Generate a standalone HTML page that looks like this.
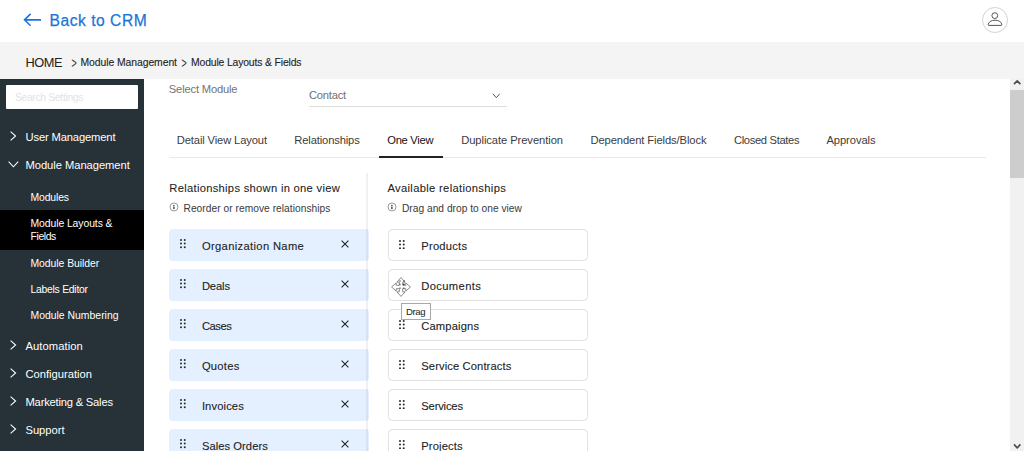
<!DOCTYPE html>
<html lang="en">
<head>
<meta charset="utf-8">
<title>Module Layouts &amp; Fields</title>
<style>
*{box-sizing:border-box;margin:0;padding:0}
html,body{width:1024px;height:451px;overflow:hidden;background:#fff}
body{position:relative;font-family:"Liberation Sans",sans-serif;color:#222}
.t{position:absolute;white-space:pre;line-height:normal;font-weight:400;font-family:"Liberation Sans",sans-serif}
.abs,svg.i{position:absolute;display:block}
ul{list-style:none}
a{text-decoration:none}
/* top header */
.top{position:absolute;left:0;top:0;width:1024px;height:42px;background:#fff}
.avatar{position:absolute;left:982.3px;top:7.2px;width:25.8px;height:25.8px;border:1px solid #d2d2d2;border-radius:50%;background:#fff}
/* breadcrumb */
.crumbs{position:absolute;left:0;top:42px;width:1024px;height:37px;background:#f4f4f4}
/* sidebar */
.side{position:absolute;left:0;top:79px;width:144px;height:372px;background:#263238}
.search{position:absolute;width:132px;height:23.5px;background:#fff;border:0;border-radius:1px}
.active-bg{position:absolute;width:144px;height:40px;background:#000}
/* main */
.main{position:absolute;left:144px;top:79px;width:866px;height:372px;background:#fff}
.sel-line{position:absolute;width:197.5px;height:1px;background:#dedede}
.tab-line{position:absolute;width:817.5px;height:1px;background:#e9e9e9}
.tab-active{position:absolute;width:64.3px;height:2px;background:#222}
.vline{z-index:2;position:absolute;width:2px;height:278px;background:rgba(0,0,0,.055)}
.li-l{position:absolute;width:200px;height:32px;background:#e4f0ff;border-radius:4px}
.li-r{position:absolute;width:200px;height:32px;background:#fff;border:1px solid #e1e1e1;border-radius:4.5px}
.tip{position:absolute;width:29.6px;height:17px;background:#fff;border:1px solid #a8a8a8}
/* scrollbar */
.sb{position:absolute;left:1010px;top:79px;width:14px;height:372px;background:#f1f1f1}
.sb-thumb{position:absolute;width:14px;height:88px;background:#cdcdcd}
.sep{transform:scale(.86,1.4);transform-origin:50% 62%}
</style>
</head>
<body>
<header class="top">
 <a class="back">
  <svg class="i" style="left:23.00px;top:13.00px" width="19" height="14" viewBox="0 0 19 14"><path d="M18 6.85 H1.6 M7.6 0.9 L1.5 6.85 L7.6 12.8" stroke="#1b74d8" stroke-width="1.55" fill="none"/></svg>
  <span class="t" style="left:49.60px;top:11.80px;font-size:15.6px;color:#1b74d8;letter-spacing:0.524px;-webkit-text-stroke:0.25px #1b74d8">Back to CRM</span>
 </a>
 <div class="avatar">
  <svg class="i" style="left:2.70px;top:1.80px" width="18" height="18" viewBox="0 0 18 18"><circle cx="8.8" cy="5.6" r="2.9" fill="none" stroke="#555" stroke-width="1"/><path d="M2.6 15.4 H15.4 C15.9 15.4 15.9 14.6 15.7 13.9 C14.9 11.4 12.2 10.2 9 10.2 C5.8 10.2 3.1 11.4 2.3 13.9 C2.1 14.6 2.1 15.4 2.6 15.4 Z" fill="none" stroke="#555" stroke-width="1"/></svg>
 </div>
</header>
<nav class="crumbs">
 <span class="t home" style="left:25.40px;top:13.00px;font-size:12.8px;color:#222;letter-spacing:-0.435px">HOME</span><span class="t sep" style="left:71.00px;top:15.50px;font-size:10.4px;color:#333;letter-spacing:0.000px">&gt;</span><span class="t" style="left:80.50px;top:15.30px;font-size:10.4px;color:#222;letter-spacing:-0.070px;-webkit-text-stroke:0.1px #222">Module Management</span><span class="t sep" style="left:181.30px;top:15.50px;font-size:10.4px;color:#333;letter-spacing:0.000px">&gt;</span><span class="t" style="left:191.00px;top:15.30px;font-size:10.4px;color:#222;letter-spacing:-0.149px;-webkit-text-stroke:0.1px #222">Module Layouts &amp; Fields</span>
</nav>
<aside class="side">
 <div class="search" style="left:6.00px;top:6.00px"></div><span class="t ph" style="left:14.90px;top:12.80px;font-size:10.4px;color:#e3e3e3;letter-spacing:-0.340px">Search Settings</span>
 <ul class="menu">
  <li><svg class="i chev" style="left:10.40px;top:51.70px" width="7" height="10" viewBox="0 0 7 10"><path d="M0.6 0.6 L5.6 5 L0.6 9.4" stroke="#fff" stroke-width="1.05" fill="none"/></svg><span class="t" style="left:25.50px;top:51.50px;font-size:11.2px;color:#fff;letter-spacing:-0.145px">User Management</span></li>
  <li class="open"><svg class="i chev" style="left:8.20px;top:81.50px" width="11" height="7" viewBox="0 0 11 7"><path d="M0.6 0.6 L5.4 5.8 L10.2 0.6" stroke="#fff" stroke-width="1.05" fill="none"/></svg><span class="t" style="left:25.50px;top:79.60px;font-size:11.2px;color:#fff;letter-spacing:-0.051px">Module Management</span>
   <ul class="sub">
    <li><span class="t" style="left:30.50px;top:112.80px;font-size:10.4px;color:#fff;letter-spacing:-0.130px">Modules</span></li>
    <li class="active"><div class="active-bg" style="left:0.00px;top:131.00px"></div><span class="t" style="left:30.50px;top:139.00px;font-size:10.4px;color:#fff;letter-spacing:-0.079px">Module Layouts &amp;</span><span class="t" style="left:30.50px;top:152.30px;font-size:10.4px;color:#fff;letter-spacing:-0.384px">Fields</span></li>
    <li><span class="t" style="left:30.50px;top:178.80px;font-size:10.4px;color:#fff;letter-spacing:-0.039px">Module Builder</span></li>
    <li><span class="t" style="left:30.50px;top:205.30px;font-size:10.4px;color:#fff;letter-spacing:-0.263px">Labels Editor</span></li>
    <li><span class="t" style="left:30.50px;top:231.40px;font-size:10.4px;color:#fff;letter-spacing:0.014px">Module Numbering</span></li>
   </ul>
  </li>
  <li><svg class="i chev" style="left:10.40px;top:260.50px" width="7" height="10" viewBox="0 0 7 10"><path d="M0.6 0.6 L5.6 5 L0.6 9.4" stroke="#fff" stroke-width="1.05" fill="none"/></svg><span class="t" style="left:25.50px;top:260.60px;font-size:11.2px;color:#fff;letter-spacing:0.078px">Automation</span></li>
  <li><svg class="i chev" style="left:10.40px;top:288.60px" width="7" height="10" viewBox="0 0 7 10"><path d="M0.6 0.6 L5.6 5 L0.6 9.4" stroke="#fff" stroke-width="1.05" fill="none"/></svg><span class="t" style="left:25.50px;top:288.70px;font-size:11.2px;color:#fff;letter-spacing:-0.004px">Configuration</span></li>
  <li><svg class="i chev" style="left:10.40px;top:316.70px" width="7" height="10" viewBox="0 0 7 10"><path d="M0.6 0.6 L5.6 5 L0.6 9.4" stroke="#fff" stroke-width="1.05" fill="none"/></svg><span class="t" style="left:25.50px;top:316.50px;font-size:11.2px;color:#fff;letter-spacing:-0.206px">Marketing &amp; Sales</span></li>
  <li><svg class="i chev" style="left:10.40px;top:344.70px" width="7" height="10" viewBox="0 0 7 10"><path d="M0.6 0.6 L5.6 5 L0.6 9.4" stroke="#fff" stroke-width="1.05" fill="none"/></svg><span class="t" style="left:25.50px;top:344.50px;font-size:11.2px;color:#fff;letter-spacing:-0.031px">Support</span></li>
 </ul>
</aside>
<main class="main">
 <div class="field"><label class="t" style="left:24.80px;top:4.40px;font-size:11.2px;color:#737373;letter-spacing:-0.176px">Select Module</label>
  <div class="select"><span class="t" style="left:165.00px;top:10.00px;font-size:11.2px;color:#707070;letter-spacing:-0.227px">Contact</span><svg class="i" style="left:348.00px;top:13.50px" width="9" height="6" viewBox="0 0 9 6"><path d="M0.9 0.8 L4.3 4.7 L7.7 0.8" stroke="#555" stroke-width="1" fill="none"/></svg><div class="sel-line" style="left:165.00px;top:26.50px"></div></div>
 </div>
 <div class="tabs">
  <span class="t" style="left:32.80px;top:55.30px;font-size:11.2px;color:#3c3c3c;letter-spacing:-0.133px">Detail View Layout</span><span class="t" style="left:150.30px;top:55.30px;font-size:11.2px;color:#3c3c3c;letter-spacing:-0.139px">Relationships</span><span class="t on" style="left:243.30px;top:55.30px;font-size:11.2px;color:#111;letter-spacing:-0.302px">One View</span><span class="t" style="left:317.20px;top:55.30px;font-size:11.2px;color:#3c3c3c;letter-spacing:-0.075px">Duplicate Prevention</span><span class="t" style="left:446.50px;top:55.30px;font-size:11.2px;color:#3c3c3c;letter-spacing:-0.103px">Dependent Fields/Block</span><span class="t" style="left:590.00px;top:55.30px;font-size:11.2px;color:#3c3c3c;letter-spacing:-0.346px">Closed States</span><span class="t" style="left:682.50px;top:55.30px;font-size:11.2px;color:#3c3c3c;letter-spacing:-0.094px">Approvals</span>
  <div class="tab-line" style="left:24.50px;top:78.00px"></div><div class="tab-active" style="left:234.50px;top:76.50px"></div>
 </div>
 <div class="vline" style="left:222.00px;top:94.00px"></div>
 <section class="col-l">
  <h3 class="t" style="left:25.30px;top:103.30px;font-size:11.2px;color:#222;letter-spacing:0.293px;-webkit-text-stroke:0.07px #222">Relationships shown in one view</h3><svg class="i info" style="left:24.60px;top:123.05px" width="10" height="10" viewBox="0 0 10 10"><circle cx="5" cy="5" r="4" fill="none" stroke="#808080" stroke-width=".8"/><circle cx="4.9" cy="3.5" r=".65" fill="#222"/><rect x="4.3" y="4.6" width="1.2" height="2.5" fill="#222"/></svg><p class="t" style="left:39.50px;top:123.50px;font-size:10.2px;color:#3a3a3a;letter-spacing:0.046px">Reorder or remove relationships</p>
  <ul class="list-l">
   <li><div class="li-l" style="left:25.00px;top:150.00px"></div><svg class="i grip" style="left:36.00px;top:160.40px" width="5.8" height="9.2" viewBox="0 0 5.8 9.2"><g fill="#2a2a2a"><circle cx="1" cy="1" r=".98"/><circle cx="4.75" cy="1" r=".98"/><circle cx="1" cy="4.6" r=".98"/><circle cx="4.75" cy="4.6" r=".98"/><circle cx="1" cy="8.2" r=".98"/><circle cx="4.75" cy="8.2" r=".98"/></g></svg><span class="t" style="left:57.90px;top:160.60px;font-size:11.2px;color:#222;letter-spacing:0.344px;-webkit-text-stroke:0.1px #222">Organization Name</span><svg class="i close" style="left:196.60px;top:160.60px" width="8" height="8" viewBox="0 0 8 8"><path d="M0.6 0.6 L7.4 7.4 M7.4 0.6 L0.6 7.4" stroke="#222" stroke-width="1.05" fill="none"/></svg></li>
   <li><div class="li-l" style="left:25.00px;top:190.00px"></div><svg class="i grip" style="left:36.00px;top:200.40px" width="5.8" height="9.2" viewBox="0 0 5.8 9.2"><g fill="#2a2a2a"><circle cx="1" cy="1" r=".98"/><circle cx="4.75" cy="1" r=".98"/><circle cx="1" cy="4.6" r=".98"/><circle cx="4.75" cy="4.6" r=".98"/><circle cx="1" cy="8.2" r=".98"/><circle cx="4.75" cy="8.2" r=".98"/></g></svg><span class="t" style="left:57.90px;top:200.60px;font-size:11.2px;color:#222;letter-spacing:-0.127px;-webkit-text-stroke:0.1px #222">Deals</span><svg class="i close" style="left:196.60px;top:200.60px" width="8" height="8" viewBox="0 0 8 8"><path d="M0.6 0.6 L7.4 7.4 M7.4 0.6 L0.6 7.4" stroke="#222" stroke-width="1.05" fill="none"/></svg></li>
   <li><div class="li-l" style="left:25.00px;top:230.00px"></div><svg class="i grip" style="left:36.00px;top:240.40px" width="5.8" height="9.2" viewBox="0 0 5.8 9.2"><g fill="#2a2a2a"><circle cx="1" cy="1" r=".98"/><circle cx="4.75" cy="1" r=".98"/><circle cx="1" cy="4.6" r=".98"/><circle cx="4.75" cy="4.6" r=".98"/><circle cx="1" cy="8.2" r=".98"/><circle cx="4.75" cy="8.2" r=".98"/></g></svg><span class="t" style="left:57.90px;top:240.60px;font-size:11.2px;color:#222;letter-spacing:-0.455px;-webkit-text-stroke:0.1px #222">Cases</span><svg class="i close" style="left:196.60px;top:240.60px" width="8" height="8" viewBox="0 0 8 8"><path d="M0.6 0.6 L7.4 7.4 M7.4 0.6 L0.6 7.4" stroke="#222" stroke-width="1.05" fill="none"/></svg></li>
   <li><div class="li-l" style="left:25.00px;top:270.00px"></div><svg class="i grip" style="left:36.00px;top:280.40px" width="5.8" height="9.2" viewBox="0 0 5.8 9.2"><g fill="#2a2a2a"><circle cx="1" cy="1" r=".98"/><circle cx="4.75" cy="1" r=".98"/><circle cx="1" cy="4.6" r=".98"/><circle cx="4.75" cy="4.6" r=".98"/><circle cx="1" cy="8.2" r=".98"/><circle cx="4.75" cy="8.2" r=".98"/></g></svg><span class="t" style="left:57.90px;top:280.60px;font-size:11.2px;color:#222;letter-spacing:0.264px;-webkit-text-stroke:0.1px #222">Quotes</span><svg class="i close" style="left:196.60px;top:280.60px" width="8" height="8" viewBox="0 0 8 8"><path d="M0.6 0.6 L7.4 7.4 M7.4 0.6 L0.6 7.4" stroke="#222" stroke-width="1.05" fill="none"/></svg></li>
   <li><div class="li-l" style="left:25.00px;top:310.00px"></div><svg class="i grip" style="left:36.00px;top:320.40px" width="5.8" height="9.2" viewBox="0 0 5.8 9.2"><g fill="#2a2a2a"><circle cx="1" cy="1" r=".98"/><circle cx="4.75" cy="1" r=".98"/><circle cx="1" cy="4.6" r=".98"/><circle cx="4.75" cy="4.6" r=".98"/><circle cx="1" cy="8.2" r=".98"/><circle cx="4.75" cy="8.2" r=".98"/></g></svg><span class="t" style="left:57.90px;top:320.60px;font-size:11.2px;color:#222;letter-spacing:0.122px;-webkit-text-stroke:0.1px #222">Invoices</span><svg class="i close" style="left:196.60px;top:320.60px" width="8" height="8" viewBox="0 0 8 8"><path d="M0.6 0.6 L7.4 7.4 M7.4 0.6 L0.6 7.4" stroke="#222" stroke-width="1.05" fill="none"/></svg></li>
   <li><div class="li-l" style="left:25.00px;top:350.00px"></div><svg class="i grip" style="left:36.00px;top:360.40px" width="5.8" height="9.2" viewBox="0 0 5.8 9.2"><g fill="#2a2a2a"><circle cx="1" cy="1" r=".98"/><circle cx="4.75" cy="1" r=".98"/><circle cx="1" cy="4.6" r=".98"/><circle cx="4.75" cy="4.6" r=".98"/><circle cx="1" cy="8.2" r=".98"/><circle cx="4.75" cy="8.2" r=".98"/></g></svg><span class="t" style="left:57.90px;top:360.60px;font-size:11.2px;color:#222;letter-spacing:0.055px;-webkit-text-stroke:0.1px #222">Sales Orders</span><svg class="i close" style="left:196.60px;top:360.60px" width="8" height="8" viewBox="0 0 8 8"><path d="M0.6 0.6 L7.4 7.4 M7.4 0.6 L0.6 7.4" stroke="#222" stroke-width="1.05" fill="none"/></svg></li>
  </ul>
 </section>
 <section class="col-r">
  <h3 class="t" style="left:243.50px;top:103.30px;font-size:11.2px;color:#222;letter-spacing:0.326px;-webkit-text-stroke:0.07px #222">Available relationships</h3><svg class="i info" style="left:243.10px;top:123.05px" width="10" height="10" viewBox="0 0 10 10"><circle cx="5" cy="5" r="4" fill="none" stroke="#808080" stroke-width=".8"/><circle cx="4.9" cy="3.5" r=".65" fill="#222"/><rect x="4.3" y="4.6" width="1.2" height="2.5" fill="#222"/></svg><p class="t" style="left:258.00px;top:123.50px;font-size:10.2px;color:#3a3a3a;letter-spacing:0.017px">Drag and drop to one view</p>
  <ul class="list-r">
   <li><div class="li-r" style="left:244.00px;top:150.00px"></div><svg class="i grip" style="left:255.10px;top:161.00px" width="5.8" height="9.2" viewBox="0 0 5.8 9.2"><g fill="#2a2a2a"><circle cx="1" cy="1" r=".98"/><circle cx="4.75" cy="1" r=".98"/><circle cx="1" cy="4.6" r=".98"/><circle cx="4.75" cy="4.6" r=".98"/><circle cx="1" cy="8.2" r=".98"/><circle cx="4.75" cy="8.2" r=".98"/></g></svg><span class="t" style="left:277.30px;top:161.40px;font-size:11.2px;color:#222;letter-spacing:0.221px;-webkit-text-stroke:0.1px #222">Products</span></li>
   <li><div class="li-r" style="left:244.00px;top:190.00px"></div><svg class="i grip" style="left:255.10px;top:201.00px" width="5.8" height="9.2" viewBox="0 0 5.8 9.2"><g fill="#2a2a2a"><circle cx="1" cy="1" r=".98"/><circle cx="4.75" cy="1" r=".98"/><circle cx="1" cy="4.6" r=".98"/><circle cx="4.75" cy="4.6" r=".98"/><circle cx="1" cy="8.2" r=".98"/><circle cx="4.75" cy="8.2" r=".98"/></g></svg><span class="t" style="left:277.30px;top:201.40px;font-size:11.2px;color:#222;letter-spacing:0.363px;-webkit-text-stroke:0.1px #222">Documents</span></li>
   <li><div class="li-r" style="left:244.00px;top:230.00px"></div><svg class="i grip" style="left:255.10px;top:241.00px" width="5.8" height="9.2" viewBox="0 0 5.8 9.2"><g fill="#2a2a2a"><circle cx="1" cy="1" r=".98"/><circle cx="4.75" cy="1" r=".98"/><circle cx="1" cy="4.6" r=".98"/><circle cx="4.75" cy="4.6" r=".98"/><circle cx="1" cy="8.2" r=".98"/><circle cx="4.75" cy="8.2" r=".98"/></g></svg><span class="t" style="left:277.30px;top:241.40px;font-size:11.2px;color:#222;letter-spacing:0.138px;-webkit-text-stroke:0.1px #222">Campaigns</span></li>
   <li><div class="li-r" style="left:244.00px;top:270.00px"></div><svg class="i grip" style="left:255.10px;top:281.00px" width="5.8" height="9.2" viewBox="0 0 5.8 9.2"><g fill="#2a2a2a"><circle cx="1" cy="1" r=".98"/><circle cx="4.75" cy="1" r=".98"/><circle cx="1" cy="4.6" r=".98"/><circle cx="4.75" cy="4.6" r=".98"/><circle cx="1" cy="8.2" r=".98"/><circle cx="4.75" cy="8.2" r=".98"/></g></svg><span class="t" style="left:277.30px;top:281.40px;font-size:11.2px;color:#222;letter-spacing:0.106px;-webkit-text-stroke:0.1px #222">Service Contracts</span></li>
   <li><div class="li-r" style="left:244.00px;top:310.00px"></div><svg class="i grip" style="left:255.10px;top:321.00px" width="5.8" height="9.2" viewBox="0 0 5.8 9.2"><g fill="#2a2a2a"><circle cx="1" cy="1" r=".98"/><circle cx="4.75" cy="1" r=".98"/><circle cx="1" cy="4.6" r=".98"/><circle cx="4.75" cy="4.6" r=".98"/><circle cx="1" cy="8.2" r=".98"/><circle cx="4.75" cy="8.2" r=".98"/></g></svg><span class="t" style="left:277.30px;top:321.40px;font-size:11.2px;color:#222;letter-spacing:-0.172px;-webkit-text-stroke:0.1px #222">Services</span></li>
   <li><div class="li-r" style="left:244.00px;top:350.00px"></div><svg class="i grip" style="left:255.10px;top:361.00px" width="5.8" height="9.2" viewBox="0 0 5.8 9.2"><g fill="#2a2a2a"><circle cx="1" cy="1" r=".98"/><circle cx="4.75" cy="1" r=".98"/><circle cx="1" cy="4.6" r=".98"/><circle cx="4.75" cy="4.6" r=".98"/><circle cx="1" cy="8.2" r=".98"/><circle cx="4.75" cy="8.2" r=".98"/></g></svg><span class="t" style="left:277.30px;top:361.40px;font-size:11.2px;color:#222;letter-spacing:0.111px;-webkit-text-stroke:0.1px #222">Projects</span></li>
  </ul>
  <svg class="i cursor" style="left:246.60px;top:197.90px" width="20" height="20" viewBox="0 0 20 20"><path d="M10 0.6 L14.1 5.2 H11.7 V8.3 H14.8 V5.9 L19.4 10 L14.8 14.1 V11.7 H11.7 V14.8 H14.1 L10 19.4 L5.9 14.8 H8.3 V11.7 H5.2 V14.1 L0.6 10 L5.2 5.9 V8.3 H8.3 V5.2 H5.9 Z" fill="#fff" fill-opacity=".55" stroke="#707070" stroke-width=".8"/></svg>
  <div class="tip" style="left:257.30px;top:223.50px"></div><span class="t" style="left:262.00px;top:226.80px;font-size:9.6px;color:#222;letter-spacing:-0.432px">Drag</span>
 </section>
</main>
<div class="sb">
 <div class="sb-thumb" style="left:0.00px;top:11.00px"></div>
 <svg class="i" style="left:3.00px;top:0.00px" width="9" height="7" viewBox="0 0 9 7"><path d="M1 5.2 L4.2 1.8 L7.4 5.2" stroke="#505050" stroke-width="1.7" stroke-linejoin="round" fill="none"/></svg>
 <svg class="i" style="left:3.00px;top:364.00px" width="9" height="7" viewBox="0 0 9 7"><path d="M1 1.4 L4.2 4.8 L7.4 1.4" stroke="#505050" stroke-width="1.7" stroke-linejoin="round" fill="none"/></svg>
</div>
</body>
</html>
